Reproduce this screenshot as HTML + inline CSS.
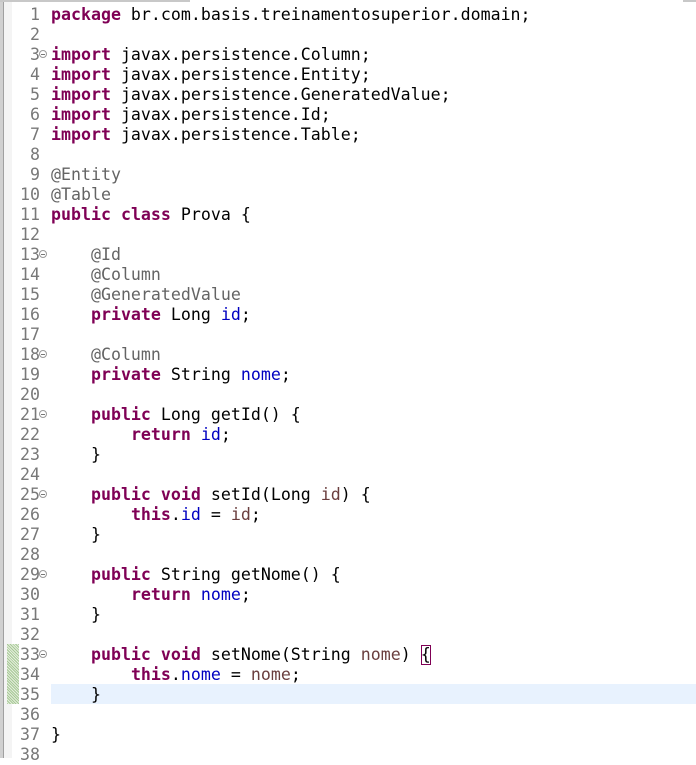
<!DOCTYPE html>
<html><head><style>
html,body{margin:0;padding:0;width:696px;height:758px;overflow:hidden;background:#fff}
.wrap{position:absolute;left:0;top:0;width:696px;height:758px}
.lstrip{position:absolute;left:0;top:0;width:3px;height:758px;background:#d0d0d0}
.lline{position:absolute;left:3px;top:0;width:1px;height:758px;background:#a0a0a0}
.lgut{position:absolute;left:4px;top:0;width:8px;height:758px;background:#f4f4f4}
.topl{position:absolute;left:0;top:0;width:190px;height:2px;background:#c8c8c8}
.topr{position:absolute;left:683px;top:0;width:13px;height:2px;background:#c8c8c8}
.hl{position:absolute;left:51px;top:684px;width:645px;height:20px;background:#e8f2fe}
.chg{position:absolute;left:7px;top:644px;width:12px;height:60px;background:repeating-linear-gradient(45deg,#a8c898 0 1px,#e4efdc 1px 2px)}
.ln,.code{position:absolute;top:5px;font-family:"DejaVu Sans Mono","Liberation Mono",monospace;font-size:16.6px;line-height:20px;white-space:pre;color:#000}
.ln{left:10px;width:30px;text-align:right;color:#787878}
.code{left:51px}
.k{color:#7f0055;font-weight:bold}
.a{color:#646464}
.f{color:#0000c0}
.p{color:#6a3e3e}
.fold{position:absolute;left:39px;width:8px;height:8px;border:1px solid #9a9a9a;border-radius:50%;box-sizing:border-box}
.fold:after{content:"";position:absolute;left:1px;top:3px;width:4px;height:1px;background:#777}
.box{display:inline-block;outline:1px solid #7f0055;outline-offset:-1px}
</style></head><body><div class="wrap">
<div class="lstrip"></div><div class="lline"></div><div class="lgut"></div>
<div class="topl"></div><div class="topr"></div>
<div class="hl"></div><div class="chg"></div>
<div class="ln">1
2
3
4
5
6
7
8
9
10
11
12
13
14
15
16
17
18
19
20
21
22
23
24
25
26
27
28
29
30
31
32
33
34
35
36
37
38</div>
<div class="fold" style="top:50px"></div>
<div class="fold" style="top:250px"></div>
<div class="fold" style="top:350px"></div>
<div class="fold" style="top:410px"></div>
<div class="fold" style="top:490px"></div>
<div class="fold" style="top:570px"></div>
<div class="fold" style="top:650px"></div>
<div class="code"><span class="k">package</span> br.com.basis.treinamentosuperior.domain;

<span class="k">import</span> javax.persistence.Column;
<span class="k">import</span> javax.persistence.Entity;
<span class="k">import</span> javax.persistence.GeneratedValue;
<span class="k">import</span> javax.persistence.Id;
<span class="k">import</span> javax.persistence.Table;

<span class="a">@Entity</span>
<span class="a">@Table</span>
<span class="k">public</span> <span class="k">class</span> Prova {

    <span class="a">@Id</span>
    <span class="a">@Column</span>
    <span class="a">@GeneratedValue</span>
    <span class="k">private</span> Long <span class="f">id</span>;

    <span class="a">@Column</span>
    <span class="k">private</span> String <span class="f">nome</span>;

    <span class="k">public</span> Long getId() {
        <span class="k">return</span> <span class="f">id</span>;
    }

    <span class="k">public</span> <span class="k">void</span> setId(Long <span class="p">id</span>) {
        <span class="k">this</span>.<span class="f">id</span> = <span class="p">id</span>;
    }

    <span class="k">public</span> String getNome() {
        <span class="k">return</span> <span class="f">nome</span>;
    }

    <span class="k">public</span> <span class="k">void</span> setNome(String <span class="p">nome</span>) <span class="box">{</span>
        <span class="k">this</span>.<span class="f">nome</span> = <span class="p">nome</span>;
    }

}
</div>
</div></body></html>
